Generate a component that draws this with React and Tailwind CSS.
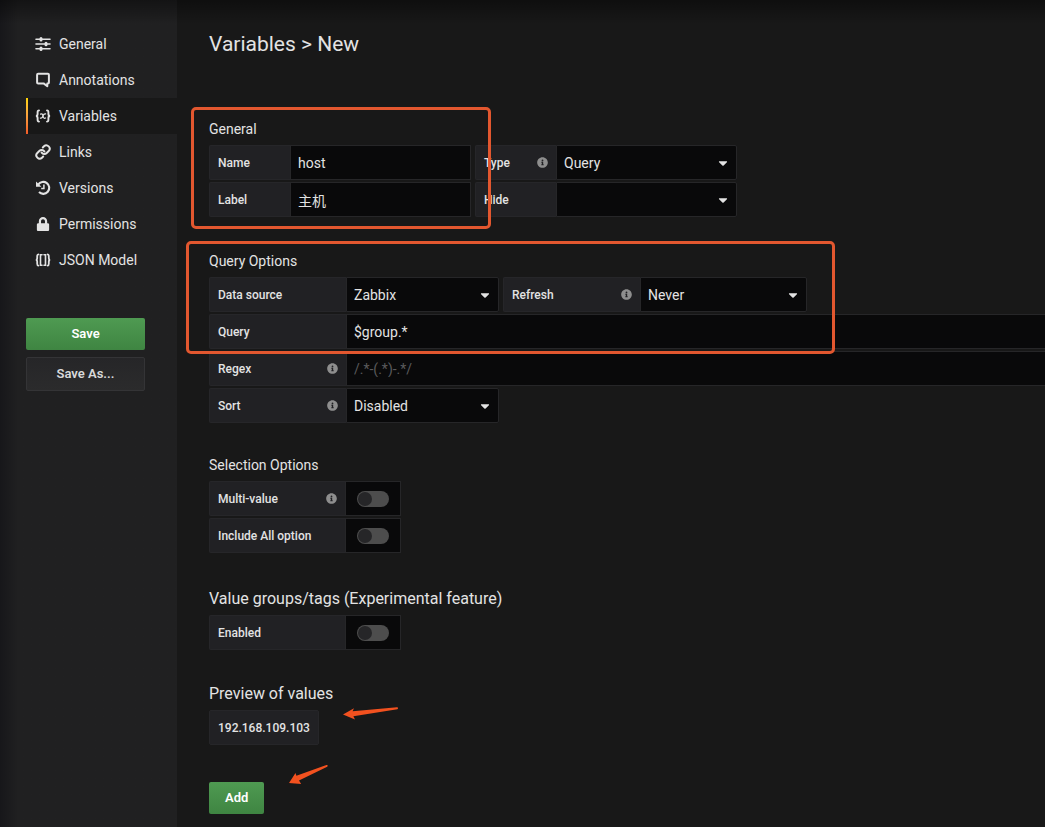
import React from 'react';
import { FaLock, FaInfoCircle, FaCaretDown } from 'react-icons/fa';
import { Link } from 'lucide-react';

const SlidersIcon = () => (
  <svg viewBox="0 0 16 16" className="w-4 h-4" fill="none" stroke="currentColor" strokeLinecap="round">
    <path d="M1 3.3h14M1 8h14M1 12.7h14" strokeWidth="1.6" />
    <path d="M6 2.5v1.6M11 7.2v1.6M6 11.9v1.6" strokeWidth="3" />
  </svg>
);

const CommentIcon = () => (
  <svg viewBox="0 0 16 16" className="w-4 h-4" fill="none" stroke="currentColor">
    <path
      d="M3.1 1.8h9.8a1 1 0 0 1 1 1v7.6a1 1 0 0 1-1 1h-.6v2.8L8.6 11.4H3.1a1 1 0 0 1-1-1V2.8a1 1 0 0 1 1-1z"
      strokeWidth="2"
      strokeLinejoin="round"
    />
  </svg>
);

const VariableIcon = () => (
  <svg viewBox="0 0 16 16" className="w-4 h-4" fill="none" stroke="currentColor" strokeLinecap="round">
    <path
      d="M4 2.4C2.7 2.4 2.6 3 2.6 4.2v1.9C2.6 7.2 2.2 8 .9 8c1.3 0 1.7.8 1.7 1.9v1.9c0 1.2.1 1.8 1.4 1.8M12 2.4c1.3 0 1.4.6 1.4 1.8v1.9c0 1.1.4 1.9 1.7 1.9-1.3 0-1.7.8-1.7 1.9v1.9c0 1.2-.1 1.8-1.4 1.8"
      strokeWidth="1.9"
    />
    <path d="M5.6 6.1c1.3-.7 1.9 0 2.3 1.5.5 2.1 1.1 3.3 2.6 2.4M10.6 5.9c-1.6-.4-2.3 1-2.7 2-.5 1.3-1.2 2.7-2.5 2.2" strokeWidth="1.3" />
  </svg>
);

const LinkIcon = () => <Link className="w-4 h-4" strokeWidth={3} />;

const HistoryIcon = () => (
  <svg viewBox="0 0 16 16" className="w-4 h-4" fill="none" stroke="currentColor">
    <path d="M3.2 4.6A6 6 0 1 1 4 12.1" strokeWidth="2.1" />
    <path d="M1 1.4V6.8h5.4z" fill="currentColor" stroke="none" />
    <path d="M8.9 4.6v3.9H6.2" strokeWidth="1.5" />
  </svg>
);

const JsonIcon = () => (
  <svg viewBox="0 0 16 16" className="w-4 h-4" fill="none" stroke="currentColor" strokeLinecap="round">
    <path
      d="M3.4 2.4c-1.1 0-1.2.6-1.2 1.8v1.9C2.2 7.2 1.9 8 .8 8c1.1 0 1.4.8 1.4 1.9v1.9c0 1.2.1 1.8 1.2 1.8M12.6 2.4c1.1 0 1.2.6 1.2 1.8v1.9c0 1.1.3 1.9 1.4 1.9-1.1 0-1.4.8-1.4 1.9v1.9c0 1.2-.1 1.8-1.2 1.8"
      strokeWidth="1.8"
    />
    <path d="M7 2.8H5.5v10.4H7M9 2.8h1.5v10.4H9" strokeWidth="1.6" />
  </svg>
);

const navItems = [
  { title: 'General', icon: SlidersIcon },
  { title: 'Annotations', icon: CommentIcon },
  { title: 'Variables', icon: VariableIcon, active: true },
  { title: 'Links', icon: LinkIcon },
  { title: 'Versions', icon: HistoryIcon },
  { title: 'Permissions', icon: FaLock },
  { title: 'JSON Model', icon: JsonIcon },
];

const Sidebar = () => (
  <aside className="w-[177px] shrink-0 pt-[26px] bg-[#202021] bg-linear-to-r from-[#17171a] to-[#202021] to-[18px]">
    <nav>
      {navItems.map(({ title, icon: Icon, active }) => (
        <a
          key={title}
          href="#"
          className={
            active
              ? 'relative flex items-center gap-2 h-9 ml-[26px] pl-[9px] bg-[#181818] text-sm text-[#e3e3e3]'
              : 'flex items-center gap-2 h-9 ml-[26px] pl-[9px] text-sm text-[#e3e3e3]'
          }
        >
          {active && (
            <span className="absolute left-0 inset-y-0 w-0.5 bg-linear-to-b from-[#ffd500] via-[#f9a03f] to-[#f05a28]" />
          )}
          <Icon className="w-4 h-[14px]" />
          {title}
        </a>
      ))}
    </nav>
    <div className="flex flex-col gap-[7px] mt-10 pl-[26px] pr-8">
      <button className="h-8 rounded-xs bg-linear-to-b from-[#4f9a52] to-[#3f8542] text-[13px] font-semibold text-white">
        Save
      </button>
      <button className="h-[34px] rounded-xs border border-[#343436] bg-linear-to-b from-[#262628] to-[#2b2b2c] text-[13px] font-semibold text-[#d8d9da]">
        Save As...
      </button>
    </div>
  </aside>
);

const Label = ({ htmlFor, width, info, children }) => (
  <label
    htmlFor={htmlFor}
    className={`${width} shrink-0 flex items-center justify-between h-[35px] pl-2 pr-2 border border-r-0 border-[#262629] rounded-l-xs bg-[#212124] text-xs font-medium text-[#e3e3e3]`}
  >
    {children}
    {info && <FaInfoCircle className="w-[11px] h-[11px] text-[#8e8e8e]" />}
  </label>
);

const TextInput = ({ width, ...props }) => (
  <input
    type="text"
    className={`${width} h-[35px] px-[7px] border border-[#262628] bg-[#09090a] text-sm text-[#e3e3e3] placeholder:text-[#5a5a5c] outline-none`}
    {...props}
  />
);

const Select = ({ id, width, value }) => (
  <div className={`${width} shrink-0 relative`}>
    <select
      id={id}
      className="appearance-none w-full h-[35px] pl-[7px] pr-6 border border-[#262628] rounded-r-xs bg-[#09090a] text-sm text-[#e3e3e3] outline-none"
    >
      <option>{value}</option>
    </select>
    <FaCaretDown className="absolute right-2 top-[11px] w-3 h-[14px] text-[#e3e3e3] pointer-events-none" />
  </div>
);

const Switch = ({ id }) => (
  <div className="flex items-center justify-center w-14 h-[35px] border border-[#262628] bg-[#09090a]">
    <input
      id={id}
      type="checkbox"
      className="appearance-none flex items-center w-8 h-4 px-px rounded-full bg-[#4d4d4d] before:w-[14px] before:h-[14px] before:rounded-full before:bg-[#262628] checked:justify-end"
    />
  </div>
);

const Row = ({ children }) => <div className="flex">{children}</div>;

const App = () => {
  return (
    <div className="flex min-h-screen overflow-hidden bg-[#181818] font-[Roboto,'Noto_Sans_CJK_SC',sans-serif] text-[#e3e3e3] relative">
      <Sidebar />

      <main className="flex-1 min-w-0 pl-8 pt-8 pb-3">
        <h1 className="mb-[63px] text-[21px] leading-6">Variables &gt; New</h1>

        {/* General */}
        <section className="relative mb-[34px]">
          <h2 className="mb-[6px] text-sm leading-5">General</h2>
          <div className="flex flex-col gap-0.5">
            <div className="flex gap-1">
              <Row>
                <Label htmlFor="name" width="w-[81px]">Name</Label>
                <TextInput id="name" width="w-[181px]" defaultValue="host" />
              </Row>
              <Row>
                <Label htmlFor="type" width="w-[81px]" info>Type</Label>
                <Select id="type" width="w-[181px]" value="Query" />
              </Row>
            </div>
            <div className="flex gap-1">
              <Row>
                <Label htmlFor="label" width="w-[81px]">Label</Label>
                <TextInput id="label" width="w-[181px]" defaultValue="主机" />
              </Row>
              <Row>
                <Label htmlFor="hide" width="w-[81px]">Hide</Label>
                <Select id="hide" width="w-[181px]" value="" />
              </Row>
            </div>
          </div>
          <div className="absolute -left-[18px] -top-3 w-[300px] h-[122px] border-3 border-[#e2572f] rounded-[5px] pointer-events-none" />
        </section>

        {/* Query options */}
        <section className="relative mb-8">
          <h2 className="mb-[6px] text-sm leading-5">Query Options</h2>
          <div className="flex flex-col gap-0.5">
            <div className="flex gap-1">
              <Row>
                <Label htmlFor="datasource" width="w-[137px]">Data source</Label>
                <Select id="datasource" width="w-[153px]" value="Zabbix" />
              </Row>
              <Row>
                <Label htmlFor="refresh" width="w-[137px]" info>Refresh</Label>
                <Select id="refresh" width="w-[167px]" value="Never" />
              </Row>
            </div>
            <Row>
              <Label htmlFor="query" width="w-[137px]">Query</Label>
              <TextInput id="query" width="flex-1 border-r-0" defaultValue="$group.*" />
            </Row>
            <Row>
              <Label htmlFor="regex" width="w-[137px]" info>Regex</Label>
              <TextInput id="regex" width="flex-1 border-r-0" placeholder="/.*-(.*)-.*/" />
            </Row>
            <Row>
              <Label htmlFor="sort" width="w-[137px]" info>Sort</Label>
              <Select id="sort" width="w-[153px]" value="Disabled" />
            </Row>
          </div>
          <div className="absolute -left-[23px] -top-[10px] w-[649px] h-[113px] border-3 border-[#e2572f] rounded-[5px] pointer-events-none" />
        </section>

        {/* Selection options */}
        <section className="mb-9">
          <h2 className="mb-[6px] text-sm leading-5">Selection Options</h2>
          <div className="flex flex-col gap-0.5">
            <Row>
              <Label htmlFor="multi" width="w-[136px]" info>Multi-value</Label>
              <Switch id="multi" />
            </Row>
            <Row>
              <Label htmlFor="include-all" width="w-[136px]">Include All option</Label>
              <Switch id="include-all" />
            </Row>
          </div>
        </section>

        <section className="mb-[34px]">
          <h2 className="mb-[6px] text-base leading-5">Value groups/tags (Experimental feature)</h2>
          <Row>
            <Label htmlFor="enabled" width="w-[136px]">Enabled</Label>
            <Switch id="enabled" />
          </Row>
        </section>

        <section className="relative mb-[37px]">
          <h2 className="mb-[6px] text-base leading-5">Preview of values</h2>
          <div className="flex">
            <span className="flex items-center h-[35px] px-2 border border-[#262629] rounded-xs bg-[#212124] text-xs font-medium">
              192.168.109.103
            </span>
          </div>
          <svg viewBox="0 0 56 14" className="absolute left-[134px] top-[22px] w-14 h-[14px]" fill="#f2511f">
            <path d="M0 8.6 11 2.2 9.6 5.2 54 1.2Q56 1.6 54.4 3.2L10.4 10.2 12 13.4z" />
          </svg>
        </section>

        <div className="relative">
          <button className="h-8 px-4 rounded-xs bg-linear-to-b from-[#4f9a52] to-[#3f8542] text-[13px] font-semibold text-white">
            Add
          </button>
          <svg viewBox="0 0 40 22" className="absolute left-20 -top-[18px] w-10 h-[22px]" fill="#f2511f">
            <path d="M0 19 6.5 9 7.4 11.8 37.4 1Q39.8 .8 38.2 2.8L10 16.6 12.2 20z" />
          </svg>
        </div>
      </main>

      {/* Shadow cast by the toolbar above */}
      <div className="absolute inset-x-0 top-0 h-6 bg-linear-to-b from-black/40 to-transparent pointer-events-none" />
    </div>
  );
};

export default App;
